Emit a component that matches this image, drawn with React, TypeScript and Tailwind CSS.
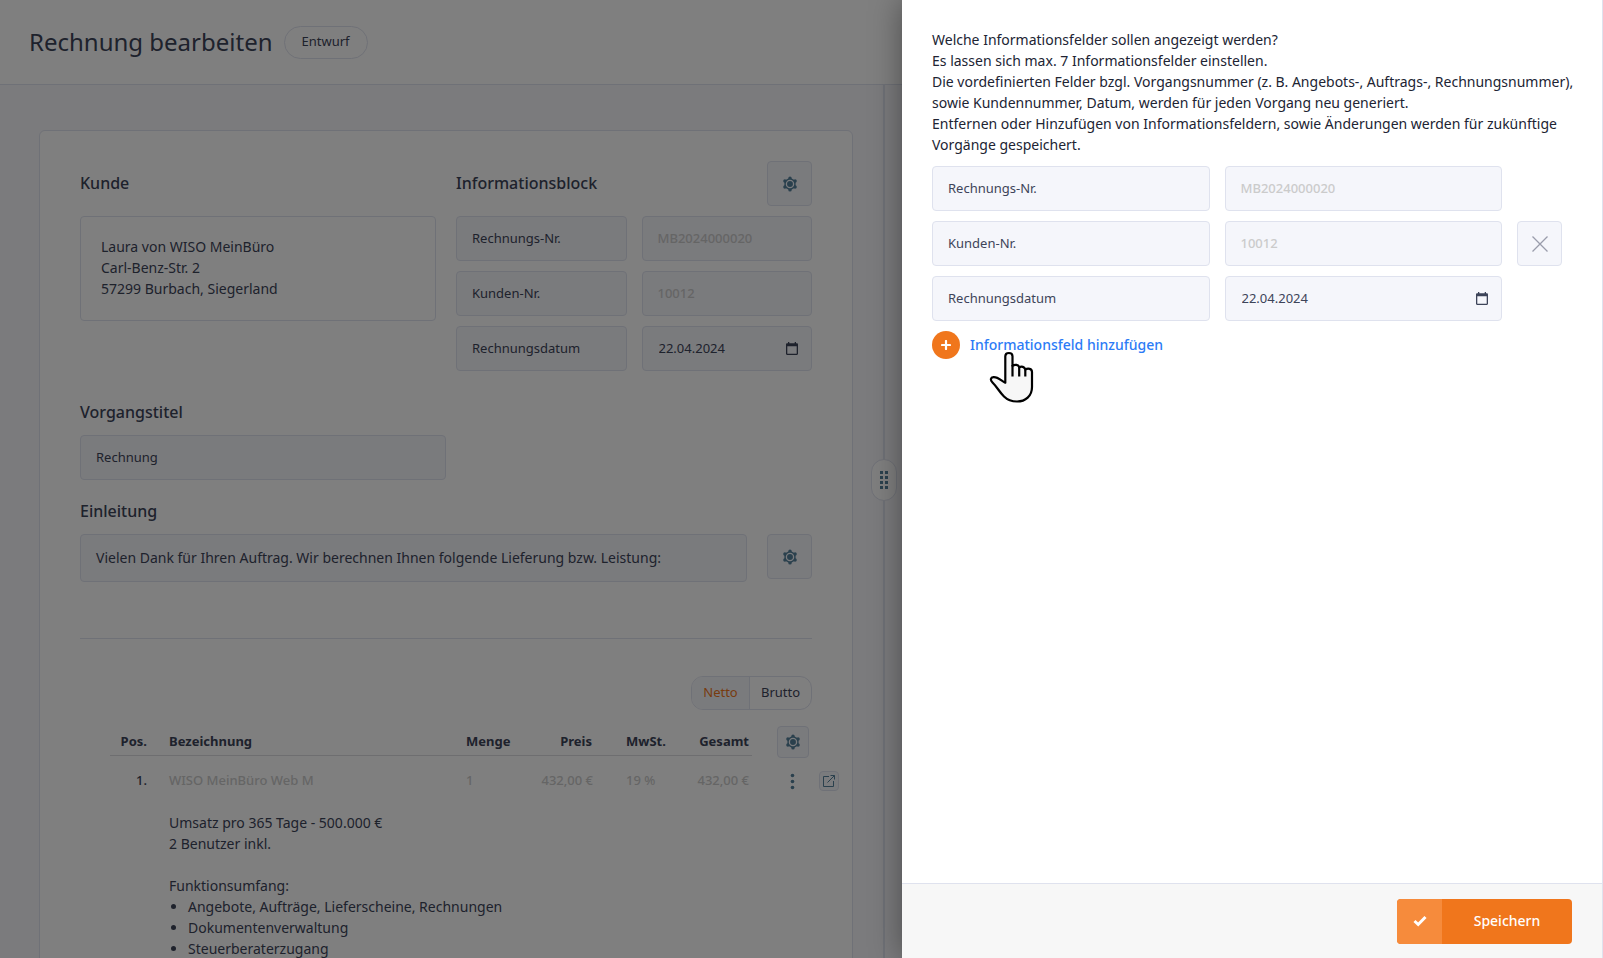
import type { ReactNode } from "react";

const fieldBox = "h-[45px] w-full min-w-0 rounded border border-[#dfe2ee] bg-[#f5f6fb] px-[15px] pb-[2px] text-[13px]";

function GearIcon() {
  return (
    <svg width="16" height="16" viewBox="0 0 16 16" fill="#54809b" aria-hidden="true">
      <path d="M8 1.500 13.600 4.750v6.500L8 14.500 2.400 11.250v-6.500Z" />
      <circle cx="8" cy="2.100" r="1.700" />
      <circle cx="13.100" cy="5" r="1.700" />
      <circle cx="13.100" cy="11" r="1.700" />
      <circle cx="8" cy="13.900" r="1.700" />
      <circle cx="2.900" cy="11" r="1.700" />
      <circle cx="2.900" cy="5" r="1.700" />
      <circle cx="8" cy="8" r="3.600" stroke="#f5f6fb" strokeWidth="1.300" />
    </svg>
  );
}

function SettingsButton({ label, small }: { label: string; small?: boolean }) {
  return (
    <button
      type="button"
      aria-label={label}
      className={
        small
          ? "flex size-8 shrink-0 items-center justify-center rounded border border-[#dfe2ee] bg-[#f5f6fb]"
          : "flex size-[45px] shrink-0 items-center justify-center rounded border border-[#dfe2ee] bg-[#f5f6fb]"
      }
    >
      <GearIcon />
    </button>
  );
}

function DateField({ label }: { label: string }) {
  return (
    <div className="flex h-[45px] w-full min-w-0 items-center rounded border border-[#dfe2ee] bg-[#f5f6fb] pl-4 pr-[13px]">
      <input aria-label={label} defaultValue="22.04.2024" className="min-w-0 flex-1 bg-transparent text-[13px]" />
      <button type="button" aria-label={`${label} auswählen`}>
        <svg width="12" height="13" viewBox="0 0 12 13" aria-hidden="true">
          <path
            fill="#3d4459"
            fillRule="evenodd"
            d="M2 0h1.300v1.200h5.400V0H10v1.200h.8c.7 0 1.200.5 1.200 1.200v9.400c0 .7-.5 1.200-1.200 1.200H1.200C.5 13 0 12.500 0 11.800V2.400c0-.7.5-1.200 1.200-1.200H2Zm-.7 4.200v7.500h9.400V4.200Z"
          />
        </svg>
      </button>
    </div>
  );
}

function InfoRow({ name, value, children }: { name: string; value?: string; children?: ReactNode }) {
  return (
    <>
      <input aria-label={`Bezeichnung ${name}`} defaultValue={name} className={fieldBox} />
      {value ? (
        <input aria-label={name} value={value} disabled className={`${fieldBox} font-medium text-[#cbcbcb]`} />
      ) : (
        <DateField label={name} />
      )}
      {children}
    </>
  );
}

function Editor() {
  return (
    <section className="mt-[45px] ml-[39px] mr-[30px] rounded-md border border-[#dfe2ee] bg-white px-10 pt-[30px] pb-10">
      <div className="grid grid-cols-2 gap-x-5">
        <div>
          <h2 className="flex h-[45px] items-center pb-[2px] text-base font-medium">Kunde</h2>
          <div className="mt-[10px] rounded border border-[#dfe2ee] px-5 pt-[19px] pb-[21px] text-sm leading-[21px]">
            Laura von WISO MeinBüro
            <br />
            Carl-Benz-Str. 2
            <br />
            57299 Burbach, Siegerland
          </div>
        </div>
        <div>
          <div className="flex items-center justify-between">
            <h2 className="pb-[2px] text-base font-medium">Informationsblock</h2>
            <SettingsButton label="Informationsblock einstellen" />
          </div>
          <div className="mt-[10px] grid grid-cols-2 gap-x-[15px] gap-y-[10px]">
            <InfoRow name="Rechnungs-Nr." value="MB2024000020" />
            <InfoRow name="Kunden-Nr." value="10012" />
            <InfoRow name="Rechnungsdatum" />
          </div>
        </div>
      </div>

      <label htmlFor="titel" className="mt-[29px] block text-base font-medium">
        Vorgangstitel
      </label>
      <input
        id="titel"
        defaultValue="Rechnung"
        className="mt-[11px] h-[45px] w-1/2 rounded border border-[#dfe2ee] bg-[#f5f6fb] px-[15px] pb-[2px] text-[13px]"
      />

      <label htmlFor="einleitung" className="mt-[19px] block text-base font-medium">
        Einleitung
      </label>
      <div className="mt-[11px] flex items-start gap-5">
        <textarea
          id="einleitung"
          rows={1}
          defaultValue="Vielen Dank für Ihren Auftrag. Wir berechnen Ihnen folgende Lieferung bzw. Leistung:"
          className="h-12 min-w-0 flex-1 resize-none overflow-hidden rounded border border-[#dfe2ee] bg-[#f5f6fb] px-[15px] py-3 text-sm leading-[21px]"
        />
        <SettingsButton label="Einleitung einstellen" />
      </div>

      <hr className="mt-14 border-[#dfe2ee]" />

      <div className="mt-[37px] flex justify-end">
        <div className="flex h-[34px] overflow-hidden rounded-xl border border-[#dfe2ee] text-[13px]">
          <button type="button" aria-pressed="true" className="w-[58px] border-r border-[#dfe2ee] bg-[#f5f6fb] text-[#f0761c]">
            Netto
          </button>
          <button type="button" aria-pressed="false" className="w-[61px]">
            Brutto
          </button>
        </div>
      </div>

      <div className="mt-4 ml-[30px] -mr-[27px]">
        <table className="w-full table-fixed text-sm leading-[21px]">
          <colgroup>
            <col className="w-[49px]" />
            <col />
            <col className="w-[60px]" />
            <col className="w-[87px]" />
            <col className="w-[70px]" />
            <col className="w-[79px]" />
            <col className="w-[67px]" />
            <col className="w-5" />
          </colgroup>
          <thead>
            <tr className="h-[29px] text-[13px] font-bold">
              <th className="border-b border-[#dcdde0] pt-[3px] pr-3 text-right">Pos.</th>
              <th className="border-b border-[#dcdde0] pt-[3px] pl-[10px] text-left">Bezeichnung</th>
              <th className="border-b border-[#dcdde0] pt-[3px] pl-[10px] text-left">Menge</th>
              <th className="border-b border-[#dcdde0] pt-[3px] pr-[11px] text-right">Preis</th>
              <th className="border-b border-[#dcdde0] pt-[3px] pl-[23px] text-left">MwSt.</th>
              <th className="border-b border-[#dcdde0] pt-[3px] pr-[3px] text-right">Gesamt</th>
              <td className="pl-[25px]">
                <div className="-mb-[3px]">
                  <SettingsButton small label="Spalten einstellen" />
                </div>
              </td>
              <td />
            </tr>
          </thead>
          <tbody>
            <tr className="align-top text-[13px] font-medium text-[#cbcbcb]">
              <td className="pt-[14px] pr-3 pb-[21px] text-right text-[#3d4459]">1.</td>
              <td className="pt-[14px] pl-[10px]">WISO MeinBüro Web M</td>
              <td className="pt-[14px] pl-[10px]">1</td>
              <td className="pt-[14px] pr-[10px] text-right whitespace-nowrap">432,00 €</td>
              <td className="pt-[14px] pl-[23px] whitespace-nowrap">19 %</td>
              <td className="pt-[14px] pr-[3px] text-right whitespace-nowrap">432,00 €</td>
              <td className="pt-4 pl-[38px]">
                <button type="button" aria-label="Weitere Aktionen" className="block">
                  <svg width="5" height="20" viewBox="0 0 5 20" fill="#54809b" aria-hidden="true">
                    <circle cx="2.500" cy="4.500" r="1.800" />
                    <circle cx="2.500" cy="10.500" r="1.800" />
                    <circle cx="2.500" cy="16.500" r="1.800" />
                  </svg>
                </button>
              </td>
              <td className="pt-4">
                <button type="button" aria-label="Artikel öffnen" className="flex size-5 items-center justify-center rounded border border-[#dfe2ee] bg-[#f5f6fb]">
                  <svg width="14" height="14" viewBox="0 0 14 14" fill="none" stroke="#54809b" strokeWidth="1" aria-hidden="true">
                    <path d="M7 2.500H1.500v10h10V7M5.500 8.500l7-7M8.500 1.500h4v4" />
                  </svg>
                </button>
              </td>
            </tr>
            <tr>
              <td />
              <td colSpan={5} className="pl-[10px]">
                <p>Umsatz pro 365 Tage - 500.000 €</p>
                <p>2 Benutzer inkl.</p>
                <p className="mt-[21px]">Funktionsumfang:</p>
                <ul className="list-disc pl-[19px]">
                  <li>Angebote, Aufträge, Lieferscheine, Rechnungen</li>
                  <li>Dokumentenverwaltung</li>
                  <li>Steuerberaterzugang</li>
                </ul>
              </td>
            </tr>
          </tbody>
        </table>
      </div>
    </section>
  );
}

function HandCursor() {
  return (
    <svg className="pointer-events-none absolute top-[20px] left-[57px]" width="46" height="53" viewBox="0 0 46 53" aria-hidden="true">
      <path
        d="M16.300 31.700V5.200C16.300 .9 23.500 .9 23.500 5.200V14.800C26 13 29.500 13.800 30.200 16.300C32.500 15 35.600 15.800 36.300 18.500C39 16.800 43 17.600 43 21V36C43 45 36.500 50.500 28 50.500C22.500 50.500 18.500 49 15 45.500C10 40.500 8.500 36.500 3.500 31.500C1 29 1.500 26.500 4.500 26.200C9 25.800 12.500 30 16.300 31.700Z"
        fill="#f7f7f7"
        stroke="#000"
        strokeWidth="2.200"
        strokeLinejoin="round"
      />
      <path d="M23.500 14v11.500M30.200 16v9.500M36.300 18.500v7" stroke="#000" strokeWidth="2.200" fill="none" />
    </svg>
  );
}

function Drawer() {
  return (
    <aside
      role="dialog"
      aria-label="Informationsfelder"
      className="absolute inset-y-0 right-0 flex w-[701px] max-w-full flex-col border-r border-[#dfe2ee] bg-white shadow-[0_0_30px_rgba(0,0,0,0.4)]"
    >
      <div className="min-h-0 flex-1 overflow-hidden pt-[29px] pr-7 pl-[30px]">
        <p className="text-sm leading-[21px] text-[#212433]">
          Welche Informationsfelder sollen angezeigt werden?
          <br />
          Es lassen sich max. 7 Informationsfelder einstellen.
          <br />
          Die vordefinierten Felder bzgl. Vorgangsnummer (z. B. Angebots-, Auftrags-, Rechnungsnummer), sowie Kundennummer,
          Datum, werden für jeden Vorgang neu generiert.
          <br />
          Entfernen oder Hinzufügen von Informationsfeldern, sowie Änderungen werden für zukünftige Vorgänge gespeichert.
        </p>
        <div className="mt-[11px] mr-3 grid grid-cols-[1fr_1fr_45px] gap-x-[15px] gap-y-[10px]">
          <InfoRow name="Rechnungs-Nr." value="MB2024000020">
            <span />
          </InfoRow>
          <InfoRow name="Kunden-Nr." value="10012">
            <button
              type="button"
              aria-label="Kunden-Nr. entfernen"
              className="flex size-[45px] items-center justify-center rounded border border-[#dfe2ee] bg-[#f5f6fb]"
            >
              <svg width="16" height="16" viewBox="0 0 16 16" stroke="#9a9cab" strokeWidth="1.300" aria-hidden="true">
                <path d="M.5.5l15 15M15.500.5l-15 15" />
              </svg>
            </button>
          </InfoRow>
          <InfoRow name="Rechnungsdatum">
            <span />
          </InfoRow>
        </div>
        <div className="relative mt-[10px] flex">
          <button type="button" className="flex items-center gap-[10px] text-sm font-medium text-[#2c7bf6]">
            <span className="flex size-7 items-center justify-center rounded-full bg-[#f0761c]">
              <svg width="10" height="10" viewBox="0 0 10 10" stroke="#fff" strokeWidth="2.200" strokeLinecap="round" aria-hidden="true">
                <path d="M5 1v8M1 5h8" />
              </svg>
            </span>
            Informationsfeld hinzufügen
          </button>
          <HandCursor />
        </div>
      </div>
      <footer className="flex h-[75px] shrink-0 items-center justify-end border-t border-[#dfe2ee] bg-[#f7f7f7] pr-[30px]">
        <button type="button" className="flex h-[45px] w-[175px] items-center overflow-hidden rounded bg-[#f0761c] text-sm font-medium text-white">
          <span className="flex h-full w-[45px] items-center justify-center bg-[#f68b3c]">
            <svg width="14" height="12" viewBox="0 0 14 12" fill="none" stroke="#fff" strokeWidth="3" aria-hidden="true">
              <path d="M1.500 6 5.200 9.500 12.500 2" />
            </svg>
          </span>
          <span className="flex-1">Speichern</span>
        </button>
      </footer>
    </aside>
  );
}

export default function App() {
  return (
    <div className="relative h-screen overflow-hidden bg-white font-['Noto_Sans',sans-serif] text-[#3d4459]">
      <div className="flex h-full flex-col">
        <header className="flex h-[85px] shrink-0 items-center gap-[11px] border-b border-[#dfe2ee] px-[29px]">
          <h1 className="text-2xl">Rechnung bearbeiten</h1>
          <span className="flex h-[33px] items-center rounded-full border border-[#dfe2ee] px-[17px] text-[13px]">Entwurf</span>
        </header>
        <div className="grid min-h-0 flex-1 grid-cols-[883fr_720fr] bg-[#f6f6fb]">
          <main className="min-h-0 overflow-hidden">
            <Editor />
          </main>
          <div className="relative border-l-2 border-[#dfe2ee]">
            <button
              type="button"
              aria-label="Breite ändern"
              className="absolute top-[374px] -left-[14px] flex h-[42px] w-[26px] items-center justify-center rounded-full border border-[#dfe2ee] bg-white"
            >
              <svg width="8" height="18" viewBox="0 0 8 18" fill="#54809b" aria-hidden="true">
                <path d="M0 0h3v3H0zM5 0h3v3H5zM0 5h3v3H0zM5 5h3v3H5zM0 10h3v3H0zM5 10h3v3H5zM0 15h3v3H0zM5 15h3v3H5z" />
              </svg>
            </button>
          </div>
        </div>
      </div>
      <div className="absolute inset-0 bg-black/50" />
      <Drawer />
    </div>
  );
}
